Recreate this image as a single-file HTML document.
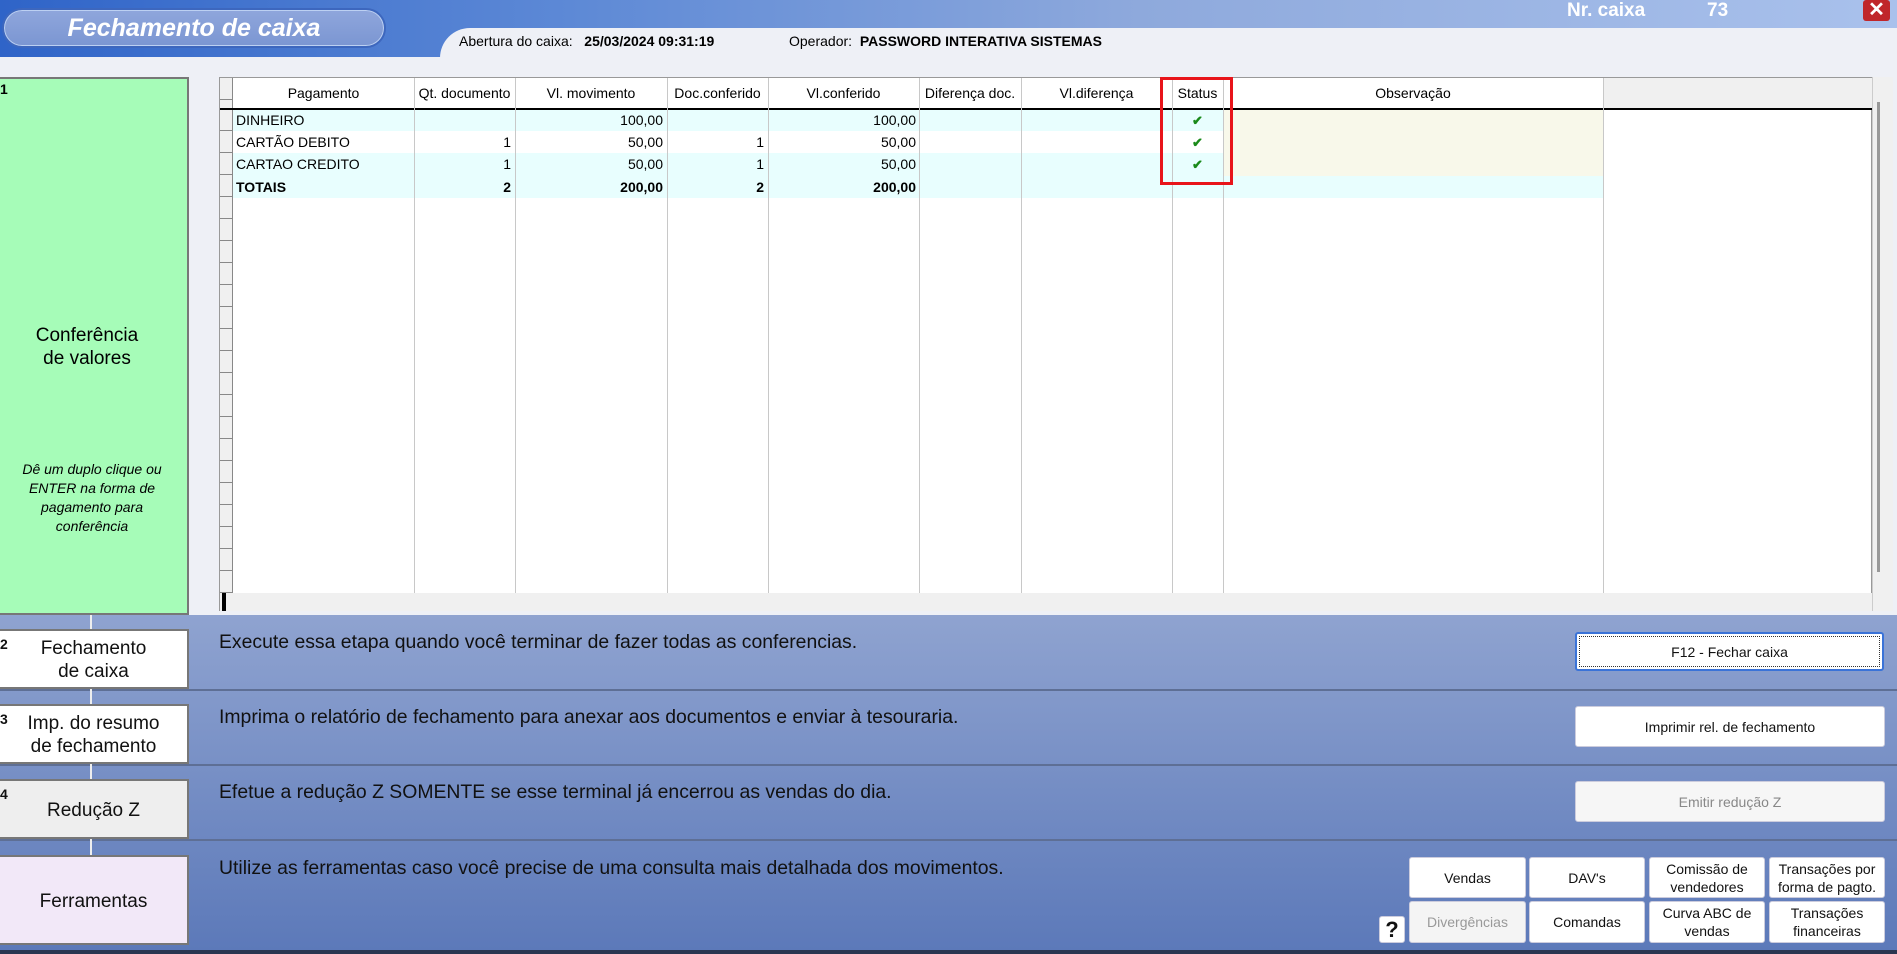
<!DOCTYPE html>
<html><head><meta charset="utf-8"><style>
*{box-sizing:border-box;margin:0;padding:0}
body{width:1897px;height:954px;overflow:hidden;background:#eef0f6;font-family:"Liberation Sans",sans-serif;position:relative;color:#000}
.abs{position:absolute}
.topbar{left:0;top:0;width:1897px;height:57px;background:linear-gradient(90deg,#2f64c8 0%,#5d89d6 30%,#8ea9dc 60%,#a9c1ec 100%)}
.lightband{left:440px;top:28px;width:1457px;height:50px;background:#eef0f6;border-top-left-radius:30px 30px}
.pill{left:2px;top:8px;width:384px;height:40px;border-radius:20px;background:linear-gradient(#8fa6dc,#7b96d2);border:2px solid #3d67be;box-shadow:0 0 0 1px #bcd0f2 inset;color:#fff;font-style:italic;font-weight:bold;font-size:25px;text-align:center;line-height:36px}
.info{top:33px;font-size:14px}
.grid{left:219px;top:77px;width:1653px;height:534px;background:#fff;border:1px solid #999}
.cell{position:absolute;font-size:14px;line-height:22px;white-space:nowrap}
.vl{position:absolute;top:0;width:1px;height:515px;background:#c8c8c8}
.bottom{left:0;top:615px;width:1897px;height:336px;background:linear-gradient(#8fa3d0,#5c79b9)}
.sep{position:absolute;left:0;width:1897px;height:2px;background:#5e6f95}
.lbox{position:absolute;left:0;width:189px;border:2px solid #777;border-left:none;text-align:center;font-size:19px;line-height:23px;color:#111}
.num{position:absolute;left:0;font-weight:bold;font-size:14px;text-align:left}
.desc{position:absolute;left:219px;font-size:19.4px;color:#111}
.btn{position:absolute;background:#fff;border:1px solid #ccd;border-radius:3px;font-size:14px;text-align:center;display:flex;align-items:center;justify-content:center;line-height:18px;color:#111}
.chk{color:#1a8a1a;font-size:13px;font-weight:bold}
</style></head><body>
<div class="abs topbar"></div>
<div class="abs lightband"></div>
<div class="abs pill">Fechamento de caixa</div>
<div class="abs info" style="left:459px">Abertura do caixa:&nbsp;&nbsp;&nbsp;<b>25/03/2024 09:31:19</b></div>
<div class="abs info" style="left:789px">Operador:&nbsp;&nbsp;<b>PASSWORD INTERATIVA SISTEMAS</b></div>
<div class="abs" style="left:1567px;top:0;color:#fff;font-weight:bold;font-size:19px">Nr. caixa</div>
<div class="abs" style="left:1707px;top:0;color:#fff;font-weight:bold;font-size:19px">73</div>
<div class="abs" style="left:1863px;top:0;width:27px;height:21px;background:#c0262a;border-radius:3px;color:#fff;font-weight:bold;font-size:20px;text-align:center;line-height:20px">✕</div>

<div class="abs" style="left:0;top:77px;width:189px;height:538px;background:#a6fcb8;border:2px solid #777;border-left:none">
<div class="num" style="top:2px">1</div>
<div class="abs" style="left:0;width:174px;top:245px;text-align:center;font-size:19px;line-height:23px">Conferência<br>de valores</div>
<div class="abs" style="left:0;width:184px;top:381px;text-align:center;font-size:14px;font-style:italic;line-height:19px">Dê um duplo clique ou<br>ENTER na forma de<br>pagamento para<br>conferência</div>
</div>

<div class="abs grid">
<div class="abs" style="left:0;top:0;width:13px;height:515px;background:#f0f0f0;border-right:1px solid #888;background-image:repeating-linear-gradient(#f0f0f0 0 21px,#888 21px 22px);background-position:0 31px"></div>
<div class="abs" style="left:1383px;top:0;width:270px;height:31px;background:#f0f0f0"></div>
<div class="abs" style="left:13px;top:31px;width:1090px;height:67px;background:#e8fefe"></div>
<div class="abs" style="left:13px;top:53px;width:1090px;height:22px;background:#fff"></div>
<div class="abs" style="left:1004px;top:31px;width:379px;height:67px;background:#f8f8ea"></div>
<div class="abs" style="left:13px;top:98px;width:1370px;height:22px;background:#e8fefe"></div>
<div class="abs" style="left:0;top:30px;width:1653px;height:2px;background:#000"></div>
<div class="abs" style="left:0;top:515px;width:1653px;height:18px;background:#f0f0f0"></div>
<div class="vl" style="left:194px"></div><div class="vl" style="left:295px"></div><div class="vl" style="left:447px"></div><div class="vl" style="left:548px"></div><div class="vl" style="left:699px"></div><div class="vl" style="left:801px"></div><div class="vl" style="left:952px"></div><div class="vl" style="left:1003px"></div><div class="vl" style="left:1383px"></div>
<div class="cell" style="left:13px;width:181px;top:4px;text-align:center">Pagamento</div>
<div class="cell" style="left:194px;width:101px;top:4px;text-align:center">Qt. documento</div>
<div class="cell" style="left:295px;width:152px;top:4px;text-align:center">Vl. movimento</div>
<div class="cell" style="left:447px;width:101px;top:4px;text-align:center">Doc.conferido</div>
<div class="cell" style="left:548px;width:151px;top:4px;text-align:center">Vl.conferido</div>
<div class="cell" style="left:699px;width:102px;top:4px;text-align:center">Diferença doc.</div>
<div class="cell" style="left:801px;width:151px;top:4px;text-align:center">Vl.diferença</div>
<div class="cell" style="left:952px;width:51px;top:4px;text-align:center">Status</div>
<div class="cell" style="left:1003px;width:380px;top:4px;text-align:center">Observação</div>

<div class="cell" style="left:16px;top:31px">DINHEIRO</div>
<div class="cell" style="left:295px;width:148px;top:31px;text-align:right">100,00</div>
<div class="cell" style="left:548px;width:148px;top:31px;text-align:right">100,00</div>
<div class="cell chk" style="left:952px;width:51px;top:32px;text-align:center">✔</div>

<div class="cell" style="left:16px;top:53px">CARTÃO DEBITO</div>
<div class="cell" style="left:194px;width:97px;top:53px;text-align:right">1</div>
<div class="cell" style="left:295px;width:148px;top:53px;text-align:right">50,00</div>
<div class="cell" style="left:447px;width:97px;top:53px;text-align:right">1</div>
<div class="cell" style="left:548px;width:148px;top:53px;text-align:right">50,00</div>
<div class="cell chk" style="left:952px;width:51px;top:54px;text-align:center">✔</div>

<div class="cell" style="left:16px;top:75px">CARTAO CREDITO</div>
<div class="cell" style="left:194px;width:97px;top:75px;text-align:right">1</div>
<div class="cell" style="left:295px;width:148px;top:75px;text-align:right">50,00</div>
<div class="cell" style="left:447px;width:97px;top:75px;text-align:right">1</div>
<div class="cell" style="left:548px;width:148px;top:75px;text-align:right">50,00</div>
<div class="cell chk" style="left:952px;width:51px;top:76px;text-align:center">✔</div>

<div class="cell" style="left:16px;top:98px;font-weight:bold">TOTAIS</div>
<div class="cell" style="left:194px;width:97px;top:98px;text-align:right;font-weight:bold">2</div>
<div class="cell" style="left:295px;width:148px;top:98px;text-align:right;font-weight:bold">200,00</div>
<div class="cell" style="left:447px;width:97px;top:98px;text-align:right;font-weight:bold">2</div>
<div class="cell" style="left:548px;width:148px;top:98px;text-align:right;font-weight:bold">200,00</div>
<div class="abs" style="left:2px;top:515px;width:4px;height:18px;background:#000"></div>
</div>
<div class="abs" style="left:1872px;top:77px;width:21px;height:534px;background:#f0f0f0;border-left:1px solid #ccc"></div>
<div class="abs" style="left:1877px;top:102px;width:3px;height:470px;background:#999"></div>
<div class="abs" style="left:1160px;top:77px;width:73px;height:108px;border:3px solid #e8141a"></div>

<div class="abs bottom">
<div class="sep" style="top:74px"></div>
<div class="sep" style="top:149px"></div>
<div class="sep" style="top:224px"></div>
<div class="abs" style="left:90px;top:0;width:2px;height:240px;background:#eee"></div>
<div class="lbox" style="top:14px;height:60px;background:#fff;padding-top:6px"><span class="num" style="top:2px">2</span>Fechamento<br>de caixa</div>
<div class="lbox" style="top:89px;height:60px;background:#fff;padding-top:6px"><span class="num" style="top:2px">3</span>Imp. do resumo<br>de fechamento</div>
<div class="lbox" style="top:164px;height:60px;background:#eee;padding-top:18px"><span class="num" style="top:2px">4</span>Redução Z</div>
<div class="lbox" style="top:240px;height:90px;background:#f2e8f8;padding-top:33px">Ferramentas</div>
<div class="desc" style="top:16px">Execute essa etapa quando você terminar de fazer todas as conferencias.</div>
<div class="desc" style="top:91px">Imprima o relatório de fechamento para anexar aos documentos e enviar à tesouraria.</div>
<div class="desc" style="top:166px">Efetue a redução Z SOMENTE se esse terminal já encerrou as vendas do dia.</div>
<div class="desc" style="top:242px">Utilize as ferramentas caso você precise de uma consulta mais detalhada dos movimentos.</div>
</div>
<div class="btn" style="left:1575px;top:632px;width:309px;height:39px;border:2px solid #3a73d8;outline:1px dotted #333;outline-offset:-5px">F12 - Fechar caixa</div>
<div class="btn" style="left:1575px;top:706px;width:310px;height:41px">Imprimir rel. de fechamento</div>
<div class="btn" style="left:1575px;top:781px;width:310px;height:41px;background:#f6f6f6;color:#888">Emitir redução Z</div>
<div class="btn" style="left:1409px;top:857px;width:117px;height:41px">Vendas</div>
<div class="btn" style="left:1529px;top:857px;width:116px;height:41px">DAV's</div>
<div class="btn" style="left:1649px;top:857px;width:116px;height:41px">Comissão de<br>vendedores</div>
<div class="btn" style="left:1769px;top:857px;width:116px;height:41px">Transações por<br>forma de pagto.</div>
<div class="btn" style="left:1409px;top:901px;width:117px;height:42px;background:#f4f4f4;color:#999">Divergências</div>
<div class="btn" style="left:1529px;top:901px;width:116px;height:42px">Comandas</div>
<div class="btn" style="left:1649px;top:901px;width:116px;height:42px">Curva ABC de<br>vendas</div>
<div class="btn" style="left:1769px;top:901px;width:116px;height:42px">Transações<br>financeiras</div>
<div class="btn" style="left:1379px;top:916px;width:26px;height:27px;font-size:22px;font-weight:bold">?</div>
<div class="abs" style="left:0;top:950px;width:1897px;height:4px;background:#2a3550"></div>
</body></html>
